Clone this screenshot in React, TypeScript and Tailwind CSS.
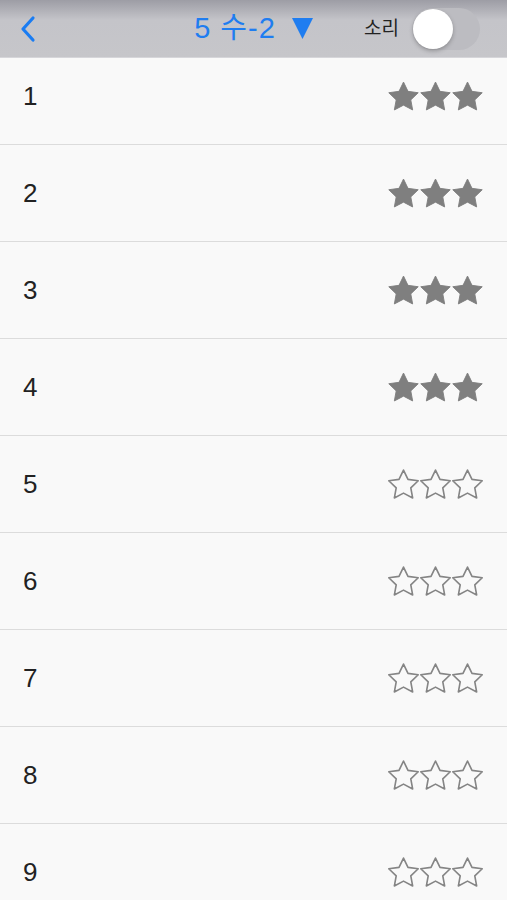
import React from "react";

const STAR = "10,0.6 12.9,6.6 19.5,7.5 14.7,12.1 15.9,18.6 10,15.5 4.1,18.6 5.3,12.1 0.5,7.5 7.1,6.6";

function Star({ filled }: { filled: boolean }) {
  return (
    <svg width="31" height="30" viewBox="0 0 20 19.2" className="block">
      <polygon
        points={STAR}
        fill={filled ? "#7f7f7f" : "none"}
        stroke={filled ? "#7f7f7f" : "#858585"}
        strokeWidth={filled ? 0.6 : 1.05}
        strokeLinejoin="round"
      />
    </svg>
  );
}

function Row({ n, filled, first }: { n: number; filled: boolean; first?: boolean }) {
  return (
    <div
      className={
        first
          ? "flex h-[87px] shrink-0 items-center justify-between border-b border-[#dcdcdc] pb-[10px] pl-[23px] pr-[24px]"
          : "flex h-[97px] shrink-0 items-center justify-between border-b border-[#dcdcdc] pl-[23px] pr-[24px]"
      }
    >
      <span className="text-[26px] leading-none text-[#222]">{n}</span>
      <div className="flex gap-[1px]">
        <Star filled={filled} />
        <Star filled={filled} />
        <Star filled={filled} />
      </div>
    </div>
  );
}

export default function App() {
  const rows = [1, 2, 3, 4, 5, 6, 7, 8, 9];
  return (
    <div
      className="flex h-[900px] w-[507px] flex-col overflow-hidden bg-[#f9f9f9]"
      style={{ fontFamily: '"Liberation Sans", "Noto Sans CJK KR", sans-serif' }}
    >
      <header className="relative z-10 grid h-[58px] shrink-0 grid-cols-[1fr_auto_1fr] items-center border-b border-[#d6d6da] bg-gradient-to-b from-[#9d9da5] via-[#c4c4c9] via-[35%] to-[#c6c6ca]">
        <div className="flex items-center pl-[19px]">
          <svg width="18" height="28" viewBox="0 0 18 28">
            <polyline
              points="14,3 4,14 14,25"
              fill="none"
              stroke="#1a7cf2"
              strokeWidth="3.2"
              strokeLinecap="round"
              strokeLinejoin="round"
            />
          </svg>
        </div>
        <div className="flex items-center gap-[16px] text-[#1f7df0]">
          <span className="text-[29px] leading-none tracking-[1px]">5 수-2</span>
          <svg width="21" height="21" viewBox="0 0 21 21">
            <polygon points="0,0 21,0 10.5,21" fill="#1f7df0" />
          </svg>
        </div>
        <div className="flex items-center justify-end gap-[13px] pr-[27px]">
          <span className="text-[19px] leading-none text-[#222]">소리</span>
          <div className="relative flex h-[42px] w-[68px] items-center rounded-full bg-[#bcbcc1]">
            <div className="ml-[1px] h-[40px] w-[40px] rounded-full bg-white shadow-[0_2px_4px_rgba(0,0,0,0.25)]" />
          </div>
        </div>
      </header>
      {rows.map((n, i) => (
        <Row key={n} n={n} filled={n <= 4} first={i === 0} />
      ))}
    </div>
  );
}
